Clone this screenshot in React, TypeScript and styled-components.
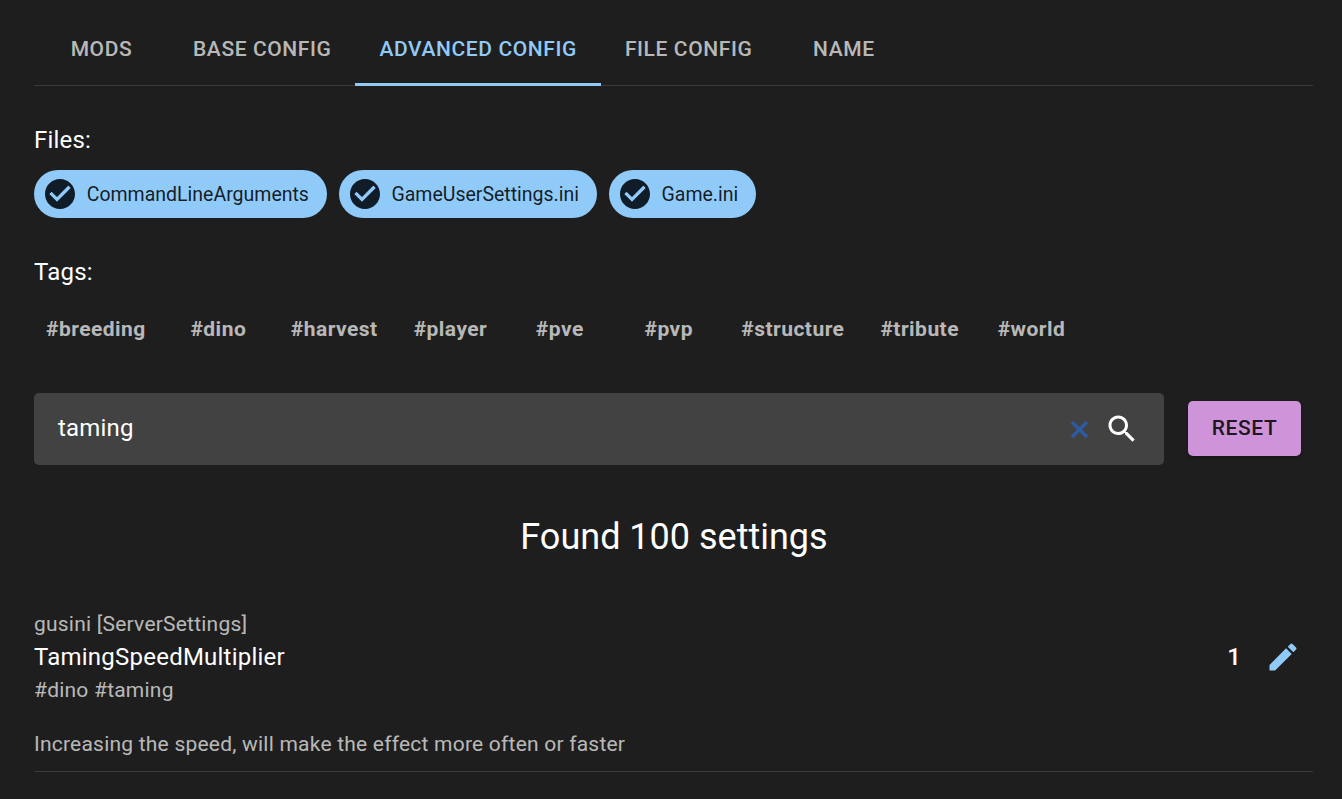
import styled, { createGlobalStyle } from "styled-components";

const GlobalStyle = createGlobalStyle`
  html, body {
    margin: 0;
    background: #1e1e1e;
    color: #fff;
    font-family: Roboto, "Liberation Sans", sans-serif;
  }
`;

const Page = styled.div`
  padding: 13px 29px 0 34px;
  height: 786px;
  overflow: hidden;
`;
const Tabs = styled.div`
  display: flex;
  height: 72px;
  border-bottom: 1px solid #3a3a3a;
`;
const Tab = styled.div<{ $active?: boolean }>`
  box-sizing: border-box;
  min-width: 135px;
  height: 73px;
  padding: 0 24px 2px;
  display: flex;
  align-items: center;
  justify-content: center;
  font-size: 21px;
  font-weight: 500;
  letter-spacing: 0.6px;
  color: ${(p) => (p.$active ? "#90caf9" : "rgba(255,255,255,0.7)")};
  border-bottom: ${(p) => (p.$active ? "3px solid #90caf9" : "none")};
  padding-top: ${(p) => (p.$active ? "1px" : "0")};
  padding-bottom: ${(p) => (p.$active ? "0" : "2px")};
`;
const SectionLabel = styled.div`
  font-size: 24px;
  line-height: 32px;
  letter-spacing: 0.2px;
`;
const FilesLabel = styled(SectionLabel)`
  margin-top: 38px;
`;
const TagsLabel = styled(SectionLabel)`
  margin-top: 38px;
`;
const ChipRow = styled.div`
  display: flex;
  gap: 12px;
  margin-top: 14px;
`;
const Chip = styled.div`
  height: 48px;
  box-sizing: border-box;
  border-radius: 24px;
  background: #90caf9;
  color: rgba(0, 0, 0, 0.87);
  display: flex;
  align-items: center;
  padding: 0 17.8px 0 8px;
  gap: 8.7px;
  font-size: 19.5px;
`;
const TagRow = styled.div`
  display: flex;
  gap: 12px;
  margin-top: 25px;
`;
const TagButton = styled.div`
  box-sizing: border-box;
  min-width: 97px;
  height: 32px;
  padding: 0 12px;
  display: flex;
  align-items: center;
  justify-content: center;
  font-size: 21px;
  font-weight: 700;
  letter-spacing: 0.47px;
  color: rgba(255, 255, 255, 0.7);
`;
const SearchRow = styled.div`
  display: flex;
  align-items: flex-start;
  gap: 24px;
  margin-top: 48px;
`;
const SearchField = styled.div`
  box-sizing: border-box;
  width: 1130px;
  height: 72px;
  border-radius: 5px;
  background: #424242;
  display: flex;
  align-items: center;
  padding: 0 24px;
  font-size: 24px;
  letter-spacing: 0.2px;
`;
const SearchValue = styled.div`
  flex: 1;
  padding-bottom: 2px;
`;
const ClearIcon = styled.svg`
  width: 27px;
  height: 27px;
  fill: #2f5ba0;
  stroke: #2f5ba0;
  stroke-width: 1.1;
  margin-right: 11px;
`;
const SearchIcon = styled.svg`
  width: 36px;
  height: 36px;
  fill: #fff;
`;
const ResetButton = styled.div`
  box-sizing: border-box;
  width: 113px;
  height: 55px;
  margin-top: 8px;
  padding-bottom: 2px;
  border-radius: 5px;
  background: #ce93d8;
  color: rgba(0, 0, 0, 0.87);
  display: flex;
  align-items: center;
  justify-content: center;
  font-size: 21px;
  font-weight: 500;
  letter-spacing: 0.6px;
  box-shadow: 0 3px 3px -2px rgba(0, 0, 0, 0.2), 0 2px 4px rgba(0, 0, 0, 0.14);
`;
const Heading = styled.h2`
  margin: 50px 0 0;
  width: 1280px;
  text-align: center;
  font-size: 36px;
  line-height: 44px;
  font-weight: 400;
`;
const Setting = styled.div`
  display: flex;
  justify-content: space-between;
  margin-top: 49px;
  padding-bottom: 10px;
  border-bottom: 1px solid #3a3a3a;
`;
const Meta = styled.div`
  font-size: 21px;
  line-height: 33px;
  letter-spacing: 0.22px;
  color: rgba(255, 255, 255, 0.7);
`;
const SettingName = styled.div`
  font-size: 24px;
  line-height: 33px;
  letter-spacing: 0.23px;
  color: #fff;
`;
const Description = styled(Meta)`
  margin-top: 21px;
`;
const ValueBox = styled.div`
  display: flex;
  align-items: center;
  gap: 24px;
  height: 36px;
  margin-top: 31px;
  padding-right: 12px;
  font-size: 24px;
  font-weight: 500;
`;
const EditIcon = styled.svg`
  width: 36px;
  height: 36px;
  fill: #90caf9;
`;
const ChipIcon = styled.svg`
  width: 36px;
  height: 36px;
  fill: #101c27;
  flex: none;
`;

const tabs = ["MODS", "BASE CONFIG", "ADVANCED CONFIG", "FILE CONFIG", "NAME"];
const files = ["CommandLineArguments", "GameUserSettings.ini", "Game.ini"];
const tags = ["#breeding", "#dino", "#harvest", "#player", "#pve", "#pvp", "#structure", "#tribute", "#world"];

function App() {
  return (
    <Page>
      <GlobalStyle />
      <Tabs>
        {tabs.map((t) => (
          <Tab key={t} $active={t === "ADVANCED CONFIG"}>
            {t}
          </Tab>
        ))}
      </Tabs>
      <FilesLabel>Files:</FilesLabel>
      <ChipRow>
        {files.map((f) => (
          <Chip key={f}>
            <ChipIcon viewBox="0 0 24 24">
              <path d="M12 2C6.48 2 2 6.48 2 12s4.48 10 10 10 10-4.48 10-10S17.52 2 12 2zm-2 15-5-5 1.41-1.41L10 14.17l7.59-7.59L19 8l-9 9z" />
              <path fill="#90caf9" d="M10 17l-5-5 1.41-1.41L10 14.17l7.59-7.59L19 8l-9 9z" />
            </ChipIcon>
            {f}
          </Chip>
        ))}
      </ChipRow>
      <TagsLabel>Tags:</TagsLabel>
      <TagRow>
        {tags.map((t) => (
          <TagButton key={t}>{t}</TagButton>
        ))}
      </TagRow>
      <SearchRow>
        <SearchField>
          <SearchValue>taming</SearchValue>
          <ClearIcon viewBox="0 0 24 24">
            <path d="M19 6.41 17.59 5 12 10.59 6.41 5 5 6.41 10.59 12 5 17.59 6.41 19 12 13.41 17.59 19 19 17.59 13.41 12z" />
          </ClearIcon>
          <SearchIcon viewBox="0 0 24 24">
            <path d="M15.5 14h-.79l-.28-.27C15.41 12.59 16 11.11 16 9.5 16 5.91 13.09 3 9.5 3S3 5.91 3 9.5 5.91 16 9.5 16c1.61 0 3.09-.59 4.23-1.57l.27.28v.79l5 4.99L20.49 19l-4.99-5zm-6 0C7.01 14 5 11.99 5 9.5S7.01 5 9.5 5 14 7.01 14 9.5 11.99 14 9.5 14z" />
          </SearchIcon>
        </SearchField>
        <ResetButton>RESET</ResetButton>
      </SearchRow>
      <Heading>Found 100 settings</Heading>
      <Setting>
        <div>
          <Meta>gusini [ServerSettings]</Meta>
          <SettingName>TamingSpeedMultiplier</SettingName>
          <Meta>#dino #taming</Meta>
          <Description>Increasing the speed, will make the effect more often or faster</Description>
        </div>
        <ValueBox>
          1
          <EditIcon viewBox="0 0 24 24">
            <path d="M3 17.25V21h3.75L17.81 9.94l-3.75-3.75L3 17.25zM20.71 7.04c.39-.39.39-1.02 0-1.41l-2.34-2.34a.9959.9959 0 0 0-1.41 0l-1.83 1.83 3.75 3.75 1.83-1.83z" />
          </EditIcon>
        </ValueBox>
      </Setting>
    </Page>
  );
}

export default App;
